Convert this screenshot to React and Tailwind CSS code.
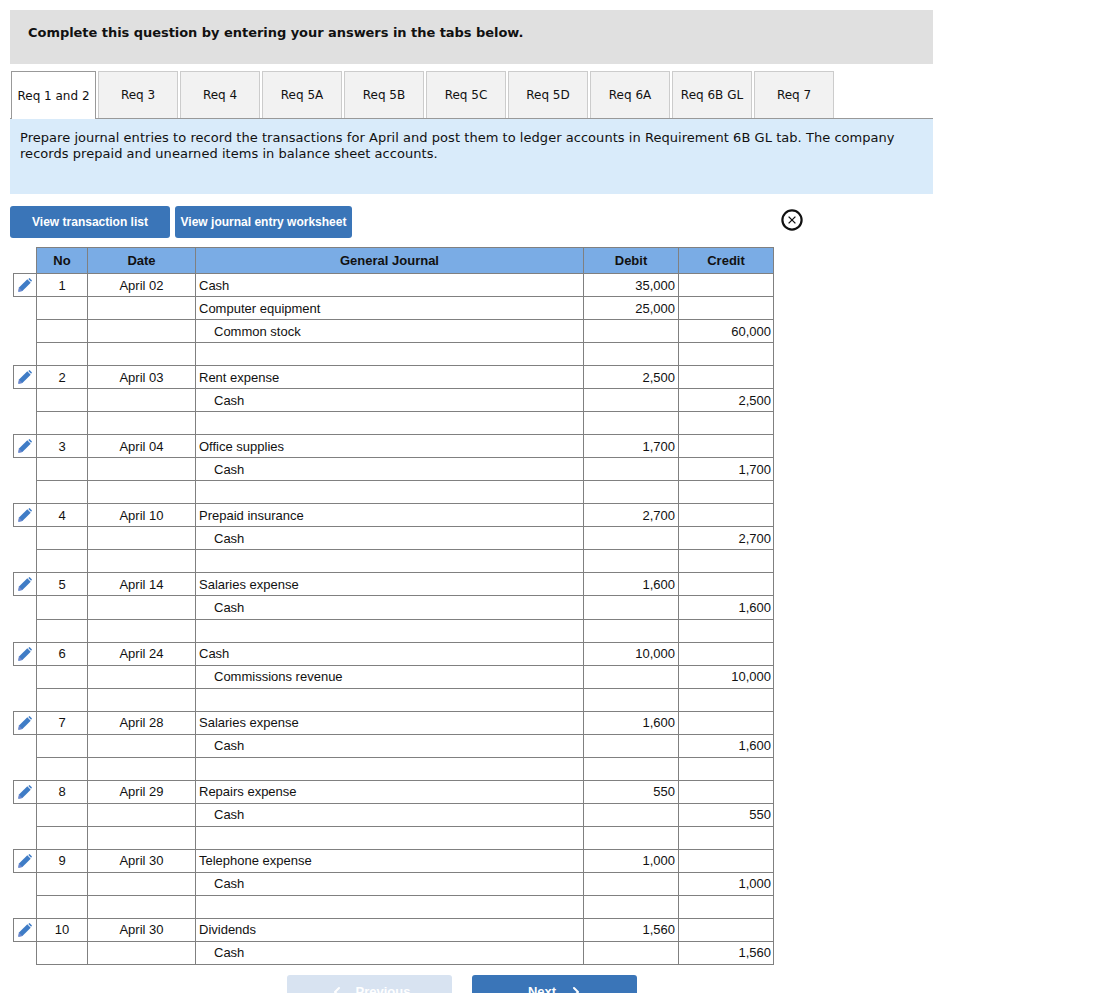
import { ChevronLeft, ChevronRight } from "lucide-react";

const tabs = ["Req 1 and 2", "Req 3", "Req 4", "Req 5A", "Req 5B", "Req 5C", "Req 5D", "Req 6A", "Req 6B GL", "Req 7"];

const entries = [
  { no: 1, date: "April 02", rows: [["Cash", "35,000", ""], ["Computer equipment", "25,000", ""], ["Common stock", "", "60,000"], ["", "", ""]] },
  { no: 2, date: "April 03", rows: [["Rent expense", "2,500", ""], ["Cash", "", "2,500"], ["", "", ""]] },
  { no: 3, date: "April 04", rows: [["Office supplies", "1,700", ""], ["Cash", "", "1,700"], ["", "", ""]] },
  { no: 4, date: "April 10", rows: [["Prepaid insurance", "2,700", ""], ["Cash", "", "2,700"], ["", "", ""]] },
  { no: 5, date: "April 14", rows: [["Salaries expense", "1,600", ""], ["Cash", "", "1,600"], ["", "", ""]] },
  { no: 6, date: "April 24", rows: [["Cash", "10,000", ""], ["Commissions revenue", "", "10,000"], ["", "", ""]] },
  { no: 7, date: "April 28", rows: [["Salaries expense", "1,600", ""], ["Cash", "", "1,600"], ["", "", ""]] },
  { no: 8, date: "April 29", rows: [["Repairs expense", "550", ""], ["Cash", "", "550"], ["", "", ""]] },
  { no: 9, date: "April 30", rows: [["Telephone expense", "1,000", ""], ["Cash", "", "1,000"], ["", "", ""]] },
  { no: 10, date: "April 30", rows: [["Dividends", "1,560", ""], ["Cash", "", "1,560"]] },
];

function PencilIcon() {
  return (
    <svg viewBox="0 0 14 14" className="w-[14px] h-[14px] mx-auto block">
      <path d="M0.3 13.7L1 9.6 9.3 1.3l3.4 3.4L4.4 13z" fill="#3f7cc6" />
      <path d="M0.3 13.7L1 9.6 4.4 13z" fill="#6f86cc" />
      <path d="M10.3 0.9L11.5 0 14 2.5l-0.9 1.2z" fill="#3f7cc6" />
    </svg>
  );
}

function CloseIcon() {
  return (
    <svg viewBox="0 0 22 22" className="w-[22px] h-[22px]">
      <circle cx="11" cy="11" r="9.6" fill="white" stroke="#111" strokeWidth="2.2" />
      <path d="M7.6 7.6l6.8 6.8M14.4 7.6l-6.8 6.8" stroke="#111" strokeWidth="1.3" />
    </svg>
  );
}

function JournalRow({ entry, row, index }) {
  const [account, debit, credit] = row;
  const indented = credit !== "";
  // row 5's second line is a pixel taller in the original, the text below it does not move
  const tall = entry.no === 5 && index === 1;
  const height = tall ? "h-[24px]" : "h-[23px]";
  const nudge = entry.no > 5 || tall ? "" : "[&>td]:pt-[2px]";
  return (
    <tr className={`${height} ${nudge}`}>
      {index === 0 ? (
        <td className="border border-[#808080] !p-0">
          <PencilIcon />
        </td>
      ) : (
        <td />
      )}
      <td className="border border-[#808080] text-center">{index === 0 ? entry.no : ""}</td>
      <td className="border border-[#808080] text-center">{index === 0 ? entry.date : ""}</td>
      <td className={`border border-[#808080] ${indented ? "pl-[18px]" : "pl-[3px]"}`}>{account}</td>
      <td className="border border-[#808080] text-right pr-[3px]">{debit}</td>
      <td className="border border-[#808080] text-right pr-[2px]">{credit}</td>
    </tr>
  );
}

export default function App() {
  return (
    <div className="h-[993px] overflow-hidden bg-white text-[#111] font-['Liberation_Sans',Arial,sans-serif]">
      <div className="w-[923px] ml-[10px] pt-[10px]">
        <div className="h-[54px] bg-[#e0e0e0] pl-[18px] pb-[8px] flex items-center font-['DejaVu_Sans',Verdana,sans-serif] text-[13px] font-bold tracking-[-0.045px]">
          Complete this question by entering your answers in the tabs below.
        </div>

        <div className="mt-[7px] h-[48px] flex gap-[2px] pl-[1px] border-b border-[#999999] font-['DejaVu_Sans',Verdana,sans-serif] text-[12px]">
          {tabs.map((tab, i) => (
            <div
              key={tab}
              className={
                i === 0
                  ? "w-[85px] h-[48px] bg-white border border-b-0 border-[#999999] flex items-center justify-center"
                  : "w-[80px] h-[47px] bg-[#f2f2f2] border border-b-0 border-[#cccccc] flex items-center justify-center"
              }
            >
              {tab}
            </div>
          ))}
        </div>

        <div className="h-[75px] bg-[#d9ebfa] px-[10px] pt-[11px] font-['DejaVu_Sans',Verdana,sans-serif] text-[13px] leading-[16px] tracking-[0.04px]">
          Prepare journal entries to record the transactions for April and post them to ledger accounts in Requirement 6B GL tab. The company records prepaid and unearned items in balance sheet accounts.
        </div>

        <div className="mt-[12px] w-[793px] flex items-center">
          <button type="button" className="w-[160px] h-[32px] rounded-[3px] bg-[#3a75b8] text-white text-[12px] font-bold">
            View transaction list
          </button>
          <button type="button" className="ml-[5px] w-[177px] h-[32px] rounded-[3px] bg-[#3a75b8] text-white text-[12px] font-bold">
            View journal entry worksheet
          </button>
          <div className="ml-auto mb-[4px]">
            <CloseIcon />
          </div>
        </div>

        <table className="mt-[9px] ml-[3px] w-[761px] table-fixed border-collapse text-[13px] leading-[16px]">
          <colgroup>
            <col className="w-[23px]" />
            <col className="w-[51px]" />
            <col className="w-[108px]" />
            <col className="w-[388px]" />
            <col className="w-[95px]" />
            <col className="w-[95px]" />
          </colgroup>
          <thead>
            <tr className="h-[26px] font-bold">
              <th />
              <th className="border border-[#808080] bg-[#7aace5]">No</th>
              <th className="border border-[#808080] bg-[#7aace5]">Date</th>
              <th className="border border-[#808080] bg-[#7aace5]">General Journal</th>
              <th className="border border-[#808080] bg-[#7aace5]">Debit</th>
              <th className="border border-[#808080] bg-[#7aace5]">Credit</th>
            </tr>
          </thead>
          <tbody>
            {entries.map((entry) =>
              entry.rows.map((row, index) => <JournalRow key={`${entry.no}-${index}`} entry={entry} row={row} index={index} />)
            )}
          </tbody>
        </table>

        <div className="mt-[10px] ml-[277px] flex gap-[20px]">
          <button type="button" className="w-[165px] h-[34px] rounded-[3px] bg-[#d8e3f1] text-white text-[13px] font-bold flex items-center justify-center gap-[11px]">
            <ChevronLeft size={16} strokeWidth={3} />
            Previous
          </button>
          <button type="button" className="w-[165px] h-[34px] pl-[3px] rounded-[3px] bg-[#3a75b8] text-white text-[13px] font-bold flex items-center justify-center gap-[12px]">
            Next
            <ChevronRight size={16} strokeWidth={3} />
          </button>
        </div>
      </div>
    </div>
  );
}
